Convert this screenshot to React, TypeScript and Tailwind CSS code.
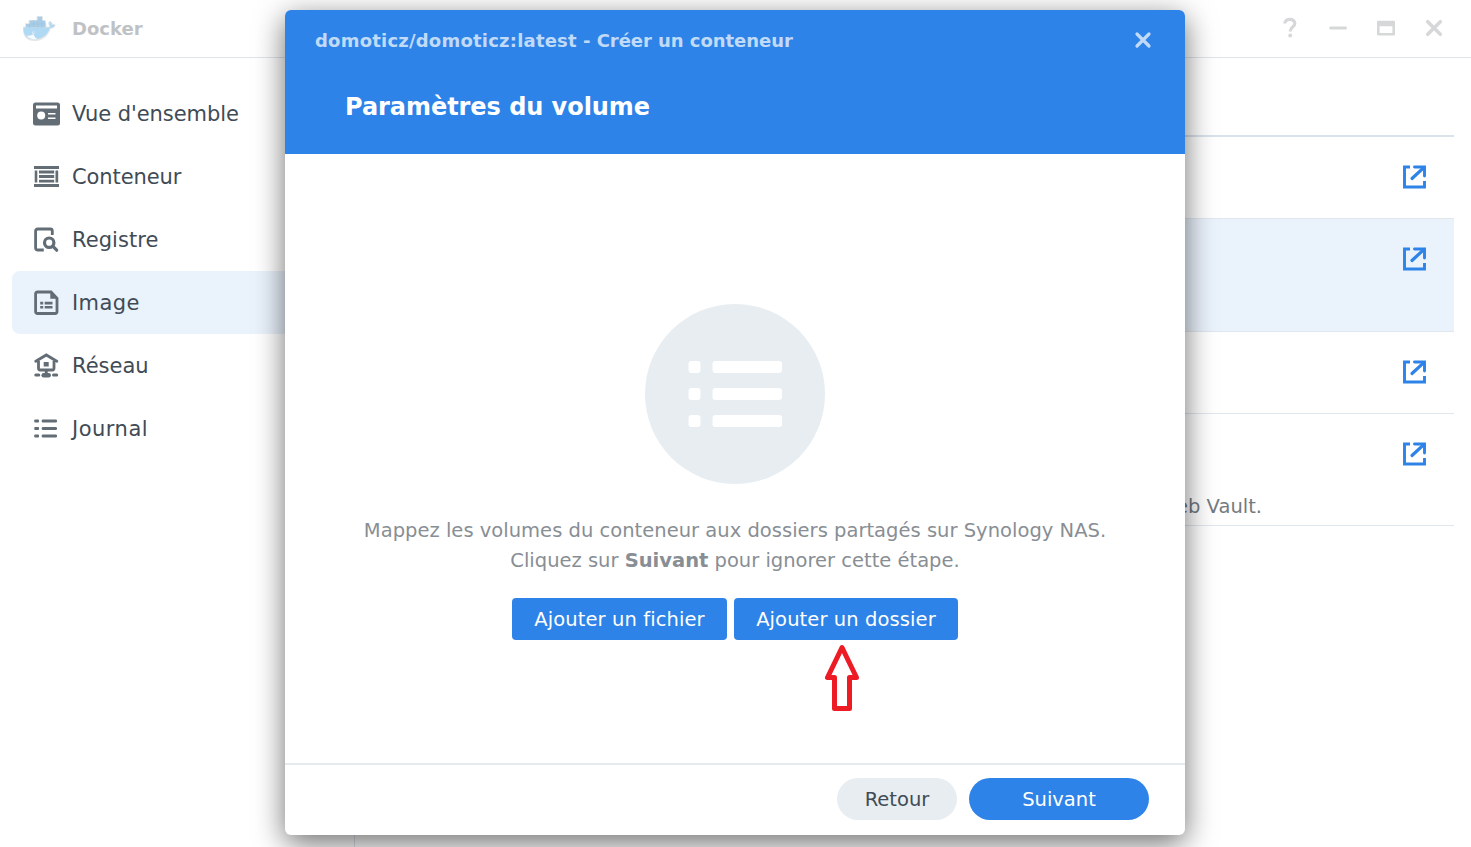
import type { ReactNode } from "react";

function Whale() {
  return (
    <svg width="36" height="30" viewBox="0 0 36 30">
      <g stroke="#e6e7e8" strokeWidth="2" strokeLinejoin="round" fill="#e6e7e8">
        <path d="M3 13.500 H27 C28.500 13.500 29.300 13 29.300 12 C28.200 10.600 28 9 28.800 7.900 C30.300 8.700 30.800 10 30.700 11 C31.800 10.700 32.800 10.800 33.500 11.300 C32.800 13 31.500 13.700 29 13.800 C26.500 21 21 26 13 26 C6 26 2.300 21 3 13.500 Z" />
        <path d="M5 13 V10 H8.500 V7 H16.500 V3 H21 V10 H24.500 V13 Z" />
      </g>
      <path d="M2.500 13.500 H27 C28.500 13.500 29.300 13 29.300 12 C28.200 10.600 28 9 28.800 7.500 C30.500 8.500 31 10 30.900 11 C32 10.700 33.200 10.800 34 11.300 C33 13.200 31.500 13.900 29 13.900 C26.500 20.800 21 25.300 13 25.300 C6 25.300 2 21 2.500 13.500 Z" fill="#b0d9f4" />
      <path d="M5 13.500 V10 H8.500 V6.500 H16.500 V2.700 H21 V6.500 H24.500 V13.500 Z" fill="#a9cde7" />
      <path d="M8.500 10 V13.500 M12.500 6.500 V13.500 M16.500 6.500 V13.500 M20.700 6.500 V13.500 M8.500 10 H24" fill="none" stroke="#98c1de" strokeWidth=".5" />
      <path d="M5.500 21.500 C8 22 10.500 21.500 12.500 20 C13 22.500 14.500 24 16.500 25 C12 26 8 24.800 5.500 21.500 Z" fill="#f7fbfd" />
      <circle cx="12.500" cy="18.800" r="1.300" fill="#e3f1fa" />
      <circle cx="12.800" cy="18.700" r=".5" fill="#91b3ca" />
    </svg>
  );
}

function OverviewIcon() {
  return (
    <svg width="28" height="24" viewBox="0 0 28 24">
      <rect x="0" y=".5" width="27" height="23" rx="2.500" fill="#636d76" />
      <path d="M3 3.500 H24 V6.500 H3 Z M15 11 H22.500 V12.500 H15 Z M15 15.500 H22.500 V17 H15 Z" fill="#fff" />
      <circle cx="8.200" cy="13.500" r="4" fill="#fff" />
    </svg>
  );
}

function ContainerIcon() {
  return (
    <svg className="ml-[1px]" width="26" height="24" viewBox="0 0 26 24" fill="#636d76">
      <path d="M0 1 H25 V4 H0 Z M0 19 H25 V22 H0 Z M.7 5.500 H3.300 V17.500 H.7 Z M21.500 5.500 H24.200 V17.500 H21.500 Z M5 5.500 H20.200 V8.500 H5 Z M5 10 H20.200 V13 H5 Z M5 14.700 H20.200 V17.500 H5 Z" />
    </svg>
  );
}

function RegistryIcon() {
  return (
    <svg className="ml-[1px]" width="26" height="26" viewBox="0 0 26 26" fill="none" stroke="#636d76" strokeWidth="2.800">
      <path d="M9.800 23 H3.800 Q1.600 23 1.600 21 V4 Q1.600 2 3.800 2 H16.200 Q18.300 2 18.300 4 V8" />
      <circle cx="15.200" cy="15.700" r="4.700" strokeWidth="3.200" />
      <path d="M18.700 19.200 L22.700 23.200" strokeWidth="3.200" strokeLinecap="round" />
    </svg>
  );
}

function ImageIcon() {
  return (
    <svg className="ml-[1px]" width="26" height="26" viewBox="0 0 26 26">
      <path d="M1.600 4 Q1.600 2 3.600 2 H17 L23 8.300 V21.500 Q23 23.500 21 23.500 H3.600 Q1.600 23.500 1.600 21.500 Z" fill="none" stroke="#636d76" strokeWidth="2.800" />
      <path d="M16.300 1 L24.200 8.800 H16.300 Z M6.200 11.800 H9.200 V14.400 H6.200 Z M10.700 11.800 H18.500 V14.400 H10.700 Z M6.200 16 H9.200 V18.600 H6.200 Z M10.700 16 H18.500 V18.600 H10.700 Z" fill="#636d76" />
    </svg>
  );
}

function NetworkIcon() {
  return (
    <svg className="ml-[1px]" width="26" height="26" viewBox="0 0 26 26" fill="none" stroke="#636d76">
      <path d="M1.800 8.200 L12.300 2 L22.800 8.200" strokeWidth="2.800" strokeLinecap="round" />
      <path d="M4.500 8 V15.300 Q4.500 17 6 17 H18.500 Q20 17 20 15.300 V8" strokeWidth="2.800" />
      <path d="M9.700 9 H14.700 V13.500 H9.700 Z M10.800 17 H13.700 V21 H10.800 Z" fill="#636d76" stroke="none" />
      <path d="M1.800 22 H4.800 M19.500 22 H22.700" strokeWidth="3" strokeLinecap="round" />
      <path d="M9.700 22.200 H14.700" strokeWidth="4.500" strokeLinecap="round" />
    </svg>
  );
}

function LogIcon() {
  return (
    <svg className="ml-[1px]" width="26" height="24" viewBox="0 0 26 24" fill="#636d76">
      <rect x=".3" y="2.500" width="4.700" height="3" rx=".8" />
      <rect x="7.700" y="2.500" width="15.300" height="3" rx="1.200" />
      <rect x=".3" y="10" width="4.700" height="3" rx=".8" />
      <rect x="7.700" y="10" width="15.300" height="3" rx="1.200" />
      <rect x=".3" y="17.500" width="4.700" height="3" rx=".8" />
      <rect x="7.700" y="17.500" width="15.300" height="3" rx="1.200" />
    </svg>
  );
}

function ExternalIcon() {
  return (
    <svg width="24" height="24" viewBox="0 0 24 24" fill="none" stroke="#2d83e7" strokeWidth="2.900">
      <path d="M8 2 H2.500 V22 H22.500 V16" />
      <path d="M12.500 2 H22.500 V11" strokeLinecap="round" />
      <path d="M10 13.500 L21.500 2.800" strokeWidth="3.200" strokeLinecap="round" />
    </svg>
  );
}

function NavItem({ icon, label, active, text }: { icon: ReactNode; label: string; active?: boolean; text: string }) {
  return (
    <div className={`flex h-[63px] items-center rounded-lg pl-5 ${active ? "bg-[#eaf2fc]" : ""}`}>
      <span className="flex w-10 items-center pl-[1px]">{icon}</span>
      <span className={`pt-[2px] whitespace-nowrap text-[21px] text-[#414b55] ${text}`}>{label}</span>
    </div>
  );
}

function ListRow({ size, note }: { size: string; note?: string }) {
  return (
    <div className={`relative flex justify-end border-b border-[#e0e7ed] pr-7 ${size}`}>
      <ExternalIcon />
      {note && (
        <span className="absolute right-48 bottom-[3px] whitespace-nowrap text-[19.500px] leading-[30px] text-[#747a80]">{note}</span>
      )}
    </div>
  );
}

export default function App() {
  return (
    <div className="relative flex h-[847px] w-[1471px] flex-col overflow-hidden bg-white font-['DejaVu_Sans',sans-serif]">
      <header className="flex h-[58px] shrink-0 items-center border-b border-[#e0e5eb] pr-[27px] pl-[21px]">
        <Whale />
        <span className="ml-[15px] text-[18px] font-bold text-[#bfc2c5]">Docker</span>
        <svg className="-mt-[1px] ml-auto" width="164" height="24" viewBox="0 0 164 24" fill="none" stroke="#d6d7d8" strokeWidth="3">
          <path d="M4.800 7.500 C5 1.800 14.800 2 14.800 7.500 C14.800 11.200 10.200 11 10.200 15.500" strokeWidth="3.200" />
          <circle cx="10.200" cy="19.500" r="2" fill="#d6d7d8" stroke="none" />
          <path d="M50.700 12 H65.500" strokeLinecap="round" />
          <path d="M98.300 6 H113.700 V18.300 H98.300 Z" strokeLinejoin="round" strokeWidth="2.600" />
          <path d="M98 8 H114" strokeWidth="4.500" />
          <path d="M147.700 5.700 L160.300 18.300 M160.300 5.700 L147.700 18.300" strokeWidth="3.500" strokeLinecap="round" />
        </svg>
      </header>

      <div className="flex min-h-0 flex-1">
        <aside className="w-[355px] shrink-0 border-r border-[#dde4ea] pt-[24px] pr-3 pl-3">
          <NavItem icon={<OverviewIcon />} label="Vue d'ensemble" text="tracking-[-0.05px]" />
          <NavItem icon={<ContainerIcon />} label="Conteneur" text="tracking-[-0.1px]" />
          <NavItem icon={<RegistryIcon />} label="Registre" text="tracking-[0.05px]" />
          <NavItem icon={<ImageIcon />} label="Image" active text="tracking-[0.4px]" />
          <NavItem icon={<NetworkIcon />} label="Réseau" text="tracking-[0px]" />
          <NavItem icon={<LogIcon />} label="Journal" text="tracking-[0.5px]" />
        </aside>
        <main className="flex-1 pr-[17px] pl-4">
          <div className="h-[79px] border-b-2 border-[#dae2ec]" />
          <ListRow size="h-[82px] pt-7" />
          <ListRow size="h-[113px] bg-[#eaf2fc] pt-7" />
          <ListRow size="h-[82px] pt-7" />
          <ListRow size="h-[112px] pt-7" note="Web Vault." />
        </main>
      </div>

      <section className="absolute top-[10px] left-[285px] flex h-[825px] w-[900px] flex-col overflow-visible rounded-md bg-white shadow-[0_8px_30px_rgba(0,0,0,0.57)]">
        <div className="h-36 shrink-0 rounded-t-md bg-[#2d83e7] pr-8 pl-[30px]">
          <div className="flex h-[60px] items-center justify-between">
            <span className="whitespace-nowrap text-[18px] font-bold tracking-[-0.05px] text-[#c0daf8]">
              <span className="tracking-[0.21px]">domoticz/domoticz:latest</span> - Créer un conteneur
            </span>
            <svg width="20" height="20" viewBox="0 0 20 20" stroke="#c0daf8" strokeWidth="3.200" strokeLinecap="round">
              <path d="M4 4 L16 16 M16 4 L4 16" />
            </svg>
          </div>
          <h1 className="pt-[1px] pl-[30px] text-[24px] leading-[72px] font-bold tracking-[-0.05px] text-white">Paramètres du volume</h1>
        </div>

        <div className="flex flex-1 flex-col items-center pt-[150px]">
          <svg width="180" height="180" viewBox="0 0 180 180">
            <circle cx="90" cy="90" r="90" fill="#e7edf1" />
            <g fill="#fff">
              <rect x="43.500" y="57" width="12" height="12" rx="3" />
              <rect x="67.500" y="57" width="69.500" height="12" rx="3" />
              <rect x="43.500" y="84" width="12" height="12" rx="3" />
              <rect x="67.500" y="84" width="69.500" height="12" rx="3" />
              <rect x="43.500" y="111" width="12" height="12" rx="3" />
              <rect x="67.500" y="111" width="69.500" height="12" rx="3" />
            </g>
          </svg>
          <div className="mt-8 text-center text-[19.500px] leading-[30px] text-[#888e94]">
            <p className="whitespace-nowrap tracking-[0.02px]">Mappez les volumes du conteneur aux dossiers partagés sur Synology NAS.</p>
            <p className="whitespace-nowrap">Cliquez sur <b>Suivant</b> pour ignorer cette étape.</p>
          </div>
          <div className="mt-[22px] flex gap-[7px]">
            <button className="h-[42px] w-[215px] rounded-[4px] bg-[#2d83e7] pt-[2px] text-[19.500px] tracking-[0.1px] whitespace-nowrap text-white">Ajouter un fichier</button>
            <button className="h-[42px] w-[224px] rounded-[4px] bg-[#2d83e7] pt-[2px] text-[19.500px] tracking-[0.1px] whitespace-nowrap text-white">Ajouter un dossier</button>
          </div>
        </div>

        <footer className="flex h-[72px] shrink-0 items-start justify-end gap-3 border-t-2 border-[#e5eaef] pt-[13px] pr-9">
          <button className="h-[42px] w-[120px] rounded-full bg-[#e7edf1] pt-[2px] text-[19.500px] text-[#414b55]">Retour</button>
          <button className="h-[42px] w-[180px] rounded-full bg-[#2d83e7] pt-[2px] text-[19.500px] text-white">Suivant</button>
        </footer>
      </section>

      <svg className="absolute top-[644px] left-[824px]" width="36" height="69" viewBox="0 0 36 69">
        <path d="M18 3.500 L3.500 33.500 H10.500 V64.500 H25.500 V33.500 H32.500 Z" fill="#fff" stroke="#ed1c24" strokeWidth="5" strokeLinejoin="round" />
      </svg>
    </div>
  );
}
